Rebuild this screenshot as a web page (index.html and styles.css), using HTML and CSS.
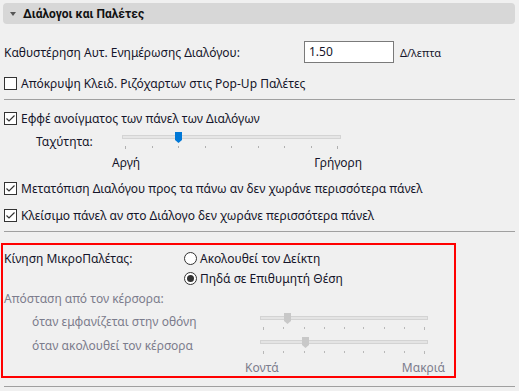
FILE: index.html
```html
<!DOCTYPE html>
<html lang="el">
  <head>
    <meta charset="UTF-8" />
    <title>Διάλογοι και Παλέτες</title>
    <link rel="stylesheet" href="styles.css">
  </head>
  <body>
    <div class="panel">
      <div class="header"><span class="arrow"></span>Διάλογοι και Παλέτες</div>

      <div class="row r-delay">
        <span class="lbl-delay">Καθυστέρηση Αυτ. Ενημέρωσης Διαλόγου:</span>
        <div class="num">1.50</div>
        <span class="unit">Δ/λεπτα</span>
      </div>

      <div class="row r-hide">
        <span class="box"></span>Απόκρυψη Κλειδ. Ριζόχαρτων στις Pop-Up Παλέτες
      </div>

      <div class="sep s-1"></div>

      <div class="row r-effect">
        <span class="box on"><svg width="11" height="11" viewBox="0 0 11 11"><path d="M1.5 5.5 L4 8 L9.5 2.5" fill="none" stroke="#333" stroke-width="1.2"/></svg></span>Εφφέ ανοίγματος των πάνελ των Διαλόγων
      </div>

      <div class="row r-speed">
        <span class="lbl-speed">Ταχύτητα:</span>
        <svg class="slider" width="222" height="20" viewBox="0 0 222 20">
          <rect x="0.5" y="4.5" width="218" height="3" fill="#e6e6e6" stroke="#d4d4d4"/>
          <g stroke="#b0b0b0">
            <line x1="3.5" y1="15" x2="3.5" y2="18"/><line x1="30.5" y1="15" x2="30.5" y2="17"/>
            <line x1="56.5" y1="15" x2="56.5" y2="17"/><line x1="83.5" y1="15" x2="83.5" y2="17"/>
            <line x1="109.5" y1="15" x2="109.5" y2="17"/><line x1="136.5" y1="15" x2="136.5" y2="17"/>
            <line x1="162.5" y1="15" x2="162.5" y2="17"/><line x1="189.5" y1="15" x2="189.5" y2="17"/>
            <line x1="215.5" y1="15" x2="215.5" y2="18"/>
          </g>
          <polygon points="53,1 60,1 60,9 56.5,12 53,9" fill="#0078d7"/>
        </svg>
      </div>

      <div class="row r-ends">
        <div class="ends speed-ends"><span>Αργή</span><span>Γρήγορη</span></div>
      </div>

      <div class="row r-move">
        <span class="box on"><svg width="11" height="11" viewBox="0 0 11 11"><path d="M1.5 5.5 L4 8 L9.5 2.5" fill="none" stroke="#333" stroke-width="1.2"/></svg></span>Μετατόπιση Διαλόγου προς τα πάνω αν δεν χωράνε περισσότερα πάνελ
      </div>

      <div class="row r-close">
        <span class="box on"><svg width="11" height="11" viewBox="0 0 11 11"><path d="M1.5 5.5 L4 8 L9.5 2.5" fill="none" stroke="#333" stroke-width="1.2"/></svg></span>Κλείσιμο πάνελ αν στο Διάλογο δεν χωράνε περισσότερα πάνελ
      </div>

      <div class="sep s-2"></div>

      <div class="marked">
        <div class="row">
          <span class="lbl-radio">Κίνηση ΜικροΠαλέτας:</span>
          <span class="radio"></span>Ακολουθεί τον Δείκτη
        </div>
        <div class="row">
          <span class="lbl-radio"></span>
          <span class="radio on"></span>Πηδά σε Επιθυμητή Θέση
        </div>
        <div class="row dim">Απόσταση από τον κέρσορα:</div>

        <div class="row dim r-dist1">
          <span class="lbl-dist">όταν εμφανίζεται στην οθόνη</span>
          <svg class="slider" width="172" height="20" viewBox="0 0 172 20">
            <rect x="1.5" y="5.5" width="167" height="3" fill="#e4e4e4" stroke="#d3d3d3"/>
            <g stroke="#b8b8b8">
              <line x1="4.5" y1="16" x2="4.5" y2="19"/><line x1="24.5" y1="16" x2="24.5" y2="18"/>
              <line x1="45.5" y1="16" x2="45.5" y2="18"/><line x1="65.5" y1="16" x2="65.5" y2="18"/>
              <line x1="85.5" y1="16" x2="85.5" y2="18"/><line x1="104.5" y1="16" x2="104.5" y2="18"/>
              <line x1="125.5" y1="16" x2="125.5" y2="18"/><line x1="145.5" y1="16" x2="145.5" y2="18"/>
              <line x1="165.5" y1="16" x2="165.5" y2="19"/>
            </g>
            <polygon points="25,2 32,2 32,10 28.5,13 25,10" fill="#c8c8c8"/>
          </svg>
        </div>

        <div class="row dim r-dist2">
          <span class="lbl-dist">όταν ακολουθεί τον κέρσορα</span>
          <svg class="slider" width="172" height="20" viewBox="0 0 172 20">
            <rect x="1.5" y="5.5" width="167" height="3" fill="#e4e4e4" stroke="#d3d3d3"/>
            <g stroke="#b8b8b8">
              <line x1="4.5" y1="16" x2="4.5" y2="19"/><line x1="24.5" y1="16" x2="24.5" y2="18"/>
              <line x1="45.5" y1="16" x2="45.5" y2="18"/><line x1="65.5" y1="16" x2="65.5" y2="18"/>
              <line x1="85.5" y1="16" x2="85.5" y2="18"/><line x1="104.5" y1="16" x2="104.5" y2="18"/>
              <line x1="125.5" y1="16" x2="125.5" y2="18"/><line x1="145.5" y1="16" x2="145.5" y2="18"/>
              <line x1="165.5" y1="16" x2="165.5" y2="19"/>
            </g>
            <polygon points="43,2 50,2 50,10 46.5,13 43,10" fill="#c8c8c8"/>
          </svg>
        </div>

        <div class="row dim r-near">
          <div class="ends dist-ends"><span>Κοντά</span><span>Μακριά</span></div>
        </div>
      </div>

      <div class="sep s-3"></div>
    </div>
  </body>
</html>
```

FILE: styles.css
```css
body {
  margin: 0;
  background: #f0f0f0;
  font-family: "Noto Sans", "Open Sans", sans-serif;
  font-size: 12px;
  color: #15152a;
}
.panel {
  padding: 3px 4px 0 4px;
}
.header {
  height: 21px;
  margin-left: -1px;
  background: #d7d7d7;
  border-radius: 4px;
  display: flex;
  align-items: center;
  font-family: Roboto, "Noto Sans", sans-serif;
  font-weight: bold;
  color: #111;
}
.arrow {
  width: 0;
  height: 0;
  margin: 1px 7px 0 7px;
  border-left: 3px solid transparent;
  border-right: 3px solid transparent;
  border-top: 4px solid #555;
}
.row {
  display: flex;
  align-items: center;
  height: 20px;
  white-space: nowrap;
}
.r-delay {
  margin-top: 17px;
  height: 22px;
}
.lbl-delay {
  width: 300px;
}
.num {
  box-sizing: border-box;
  width: 90px;
  height: 22px;
  background: white;
  border: 1px solid #7a7a7a;
  padding-left: 4px;
  line-height: 20px;
}
.unit {
  margin-left: 6px;
  font-size: 11px;
}
.r-hide {
  margin-top: 10px;
}
.box {
  box-sizing: border-box;
  width: 13px;
  height: 13px;
  border: 1px solid #333;
  background: white;
  margin-right: 4px;
  display: flex;
}
.sep {
  height: 1px;
  background: #a0a0a0;
}
.s-1 {
  margin-top: 6px;
}
.r-effect {
  margin-top: 8px;
}
.r-speed {
  margin-top: 3px;
}
.lbl-speed {
  box-sizing: border-box;
  width: 118px;
  padding-left: 32px;
}
.r-ends {
  margin-top: 1px;
}
.ends {
  display: flex;
  justify-content: space-between;
}
.speed-ends {
  margin-left: 108px;
  width: 250px;
}
.r-move {
  margin-top: 6px;
}
.r-close {
  margin-top: 7px;
}
.s-2 {
  margin-top: 6px;
}
.marked {
  box-sizing: border-box;
  margin: 11px 0 0 -3px;
  width: 455px;
  height: 135px;
  border: 2px solid #f00;
  padding: 3px 0 0 1px;
}
.lbl-radio {
  width: 180px;
}
.radio {
  box-sizing: border-box;
  width: 13px;
  height: 13px;
  border: 1px solid #333;
  border-radius: 50%;
  background: white;
  margin-right: 3px;
  display: flex;
  align-items: center;
  justify-content: center;
}
.radio.on::after {
  content: "";
  width: 7px;
  height: 7px;
  border-radius: 50%;
  background: #333;
}
.dim {
  color: #7c7c8c;
}
.lbl-dist {
  box-sizing: border-box;
  width: 255px;
  padding-left: 28px;
}
.r-dist1 {
  margin-top: 3px;
}
.r-dist2 {
  margin-top: 4px;
}
.r-near {
  margin-top: 3px;
  height: 18px;
}
.dist-ends {
  margin-left: 241px;
  width: 200px;
}
.s-3 {
  margin-top: 8px;
}
```
